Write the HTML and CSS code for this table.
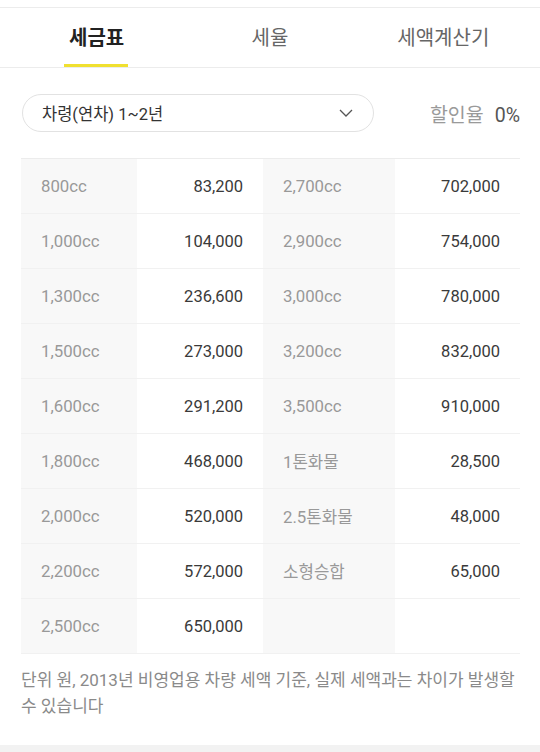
FILE: index.html
```html
<!DOCTYPE html>
<html lang="ko">
<head>
<meta charset="utf-8">
<link rel="stylesheet" href="styles.css">
</head>
<body>
<div class="page">
  <nav class="tabs">
    <div class="tab active"><span class="tl">세금표</span></div>
    <div class="tab"><span class="tl">세율</span></div>
    <div class="tab"><span class="tl">세액계산기</span></div>
  </nav>
  <div class="filter">
    <div class="select">
      <span>차령(연차) 1~2년</span>
      <svg class="chev" width="14" height="8" viewBox="0 0 14 8"><path d="M1 1l6 6 6-6" fill="none" stroke="#555" stroke-width="1.3"/></svg>
    </div>
    <div class="discount"><span class="dl">할인율</span><span class="dv">0%</span></div>
  </div>
  <div class="table">
    <div class="row"><div class="k">800cc</div><div class="v">83,200</div><div class="k">2,700cc</div><div class="v">702,000</div></div>
    <div class="row"><div class="k">1,000cc</div><div class="v">104,000</div><div class="k">2,900cc</div><div class="v">754,000</div></div>
    <div class="row"><div class="k">1,300cc</div><div class="v">236,600</div><div class="k">3,000cc</div><div class="v">780,000</div></div>
    <div class="row"><div class="k">1,500cc</div><div class="v">273,000</div><div class="k">3,200cc</div><div class="v">832,000</div></div>
    <div class="row"><div class="k">1,600cc</div><div class="v">291,200</div><div class="k">3,500cc</div><div class="v">910,000</div></div>
    <div class="row"><div class="k">1,800cc</div><div class="v">468,000</div><div class="k">1톤화물</div><div class="v">28,500</div></div>
    <div class="row"><div class="k">2,000cc</div><div class="v">520,000</div><div class="k">2.5톤화물</div><div class="v">48,000</div></div>
    <div class="row"><div class="k">2,200cc</div><div class="v">572,000</div><div class="k">소형승합</div><div class="v">65,000</div></div>
    <div class="row"><div class="k">2,500cc</div><div class="v">650,000</div><div class="k"></div><div class="v"></div></div>
  </div>
  <p class="note">단위 원, 2013년 비영업용 차량 세액 기준, 실제 세액과는 차이가 발생할 수 있습니다</p>
  <div class="band"></div>
</div>
</body>
</html>
```
FILE: styles.css
```css
* { box-sizing: border-box; }
html, body { margin: 0; padding: 0; background: #fff; }
body { font-family: Roboto, "Noto Sans CJK KR", sans-serif; color: #333; width: 540px; height: 752px; overflow: hidden; }
.page { padding-top: 7px; }
.tabs { display: flex; border-top: 1px solid #ececec; border-bottom: 1px solid #ececec; height: 61px; padding: 0 10px; }
.tab { flex: 1; display: flex; align-items: center; justify-content: center; font-size: 20px; color: #666; padding-bottom: 2px; }
.tl { position: relative; }
.tab.active { color: #222; font-weight: 700; }
.tab.active .tl::after { content: ""; position: absolute; left: -5px; right: -4px; bottom: -16px; height: 3px; background: #f0e030; }
.filter { display: flex; align-items: center; padding: 26px 20px 26px 22px; }
.select { width: 352px; height: 38px; border: 1px solid #e2e2e2; border-radius: 19px; display: flex; align-items: center; justify-content: space-between; padding: 0 20px 0 19px; font-size: 16.5px; color: #333; }
.chev { display: block; }
.discount { margin-left: auto; display: flex; align-items: baseline; gap: 11px; font-size: 19.5px; }
.dl { color: #9a9a9a; }
.dv { color: #555; }
.table { margin: 0 20px 0 21px; border-top: 1px solid #ececec; }
.row { display: grid; grid-template-columns: 116px 126px 132px 125px; height: 55px; }
.k, .v { display: flex; align-items: center; border-bottom: 1px solid #f1f1f1; }
.k { background: #f8f8f8; color: #999; padding-left: 20px; font-size: 16.8px; }
.v { justify-content: flex-end; padding-right: 20px; color: #3a3a3a; font-size: 16.5px; }
.note { margin: 0; padding: 13px 20px 0 21px; font-size: 17px; line-height: 26px; color: #8a8a8a; height: 91px; }
.band { height: 10px; background: #f2f2f2; }
```
